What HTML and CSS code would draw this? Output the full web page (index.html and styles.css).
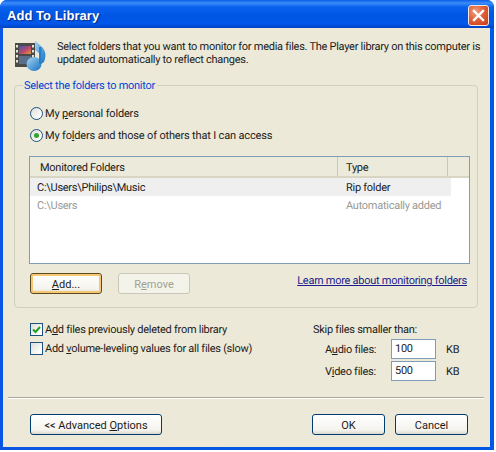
FILE: index.html
```html
<!DOCTYPE html>
<html lang="en">
<head>
<meta charset="utf-8">
<title>Add To Library</title>
<link rel="stylesheet" href="styles.css">
</head>
<body>
<div class="window">
  <header class="titlebar">
    <span class="title">Add To Library</span>
    <span class="close">
      <svg width="15" height="15" viewBox="0 0 15 15"><path d="M3 3 L12 12 M12 3 L3 12" stroke="#fff" stroke-width="2.4" stroke-linecap="square" fill="none"/></svg>
    </span>
  </header>
  <main class="client">
    <div class="intro">
      <svg class="media-icon" width="34" height="34" viewBox="0 0 34 34">
        <defs>
          <linearGradient id="note" x1="0" y1="0" x2="1" y2="1"><stop offset="0" stop-color="#a8d6f4"/><stop offset="1" stop-color="#1470c0"/></linearGradient>
          <linearGradient id="pic" x1="0" y1="0" x2="1" y2="1"><stop offset="0" stop-color="#3a58b8"/><stop offset=".55" stop-color="#c0486a"/><stop offset="1" stop-color="#d8a040"/></linearGradient>
        </defs>
        <path d="M21 3 C22 3 24 5 27 8 C31 12 33 16 30 24 L27 26 L26 16 L21 12 Z" fill="url(#note)"/>
        <rect x="1" y="5" width="20" height="24" fill="#4a4a48"/>
        <rect x="5" y="8" width="12" height="8" fill="url(#pic)"/>
        <rect x="5" y="18" width="12" height="8" fill="#58708a"/>
        <path d="M2 7h2v2.500h-2zM2 12h2v2.500h-2zM2 17h2v2.500h-2zM2 22h2v2.500h-2zM18 7h2v2.500h-2zM18 12h2v2.500h-2zM18 17h2v2.500h-2zM18 22h2v2.500h-2z" fill="#e8e4d8"/>
        <ellipse cx="20" cy="26" rx="7.500" ry="7" fill="url(#note)"/>
        <rect x="25" y="9" width="2.500" height="17" fill="#2a80c8"/>
      </svg>
      <p class="intro-text">Select folders that you want to monitor for media files. The Player library on this computer is updated automatically to reflect changes.</p>
    </div>

    <fieldset class="group">
      <legend class="group-title">Select the folders to monitor</legend>
      <label class="radio-row">
        <span class="radio"></span>
        <span>My <u>p</u>ersonal folders</span>
      </label>
      <label class="radio-row">
        <span class="radio"><span class="radio-dot"></span></span>
        <span>My fo<u>l</u>ders and those of others that I can access</span>
      </label>
      <div class="list">
        <div class="list-head">
          <span class="col-a head-cell">Monitored Folders</span>
          <span class="col-b head-cell">Type</span>
          <span class="col-c"></span>
        </div>
        <div class="list-row selected"><span class="col-a">C:\Users\Philips\Music</span><span class="col-b">Rip folder</span></div>
        <div class="list-row muted"><span class="col-a">C:\Users</span><span class="col-b">Automatically added</span></div>
      </div>
      <div class="list-actions">
        <button class="btn btn-add focused" type="button"><u>A</u>dd...</button>
        <button class="btn btn-add disabled" type="button">R<u>e</u>move</button>
        <a class="link" href="#">Learn more about monitoring folders</a>
      </div>
    </fieldset>

    <div class="options">
      <div class="checks">
        <label class="check-row">
          <span class="checkbox"><svg width="11" height="11" viewBox="0 0 11 11"><path d="M2 5.500 L4.500 8 L9 3" stroke="#21a121" stroke-width="2" fill="none"/></svg></span>
          <span>A<u>d</u>d files previously deleted from library</span>
        </label>
        <label class="check-row">
          <span class="checkbox"></span>
          <span>Add <u>v</u>olume-leveling values for all files (slow)</span>
        </label>
      </div>
      <div class="skip">
        <div class="skip-title">Skip files smaller than:</div>
        <div class="skip-row"><span class="skip-label">A<u>u</u>dio files:</span><span class="field">100</span><span>KB</span></div>
        <div class="skip-row"><span class="skip-label">V<u>i</u>deo files:</span><span class="field">500</span><span>KB</span></div>
      </div>
    </div>

    <hr class="separator">

    <div class="footer">
      <button class="btn btn-adv" type="button">&lt;&lt; Advanced <u>O</u>ptions</button>
      <div class="footer-right">
        <button class="btn btn-ok" type="button">OK</button>
        <button class="btn btn-ok" type="button">Cancel</button>
      </div>
    </div>
  </main>
</div>
</body>
</html>
```
FILE: styles.css
```css
* { box-sizing: border-box; }
html, body { margin: 0; padding: 0; background: #fff; }
body { width: 496px; height: 452px; font: 11px/13px Roboto, "Liberation Sans", sans-serif; color: #1c1c1c; white-space: nowrap; text-rendering: geometricPrecision; letter-spacing: -.27px; }
u { text-decoration: underline; text-underline-offset: 1px; }
.window {
  width: 494px; height: 450px; display: flex; flex-direction: column;
  background: linear-gradient(90deg, #0a55e4 0, #0058e6 100%);
  border-radius: 7px 7px 0 0; overflow: hidden;
}
.titlebar {
  height: 28px; flex: none; display: flex; align-items: center; justify-content: space-between;
  padding: 3px 5px 0 7px;
  background: linear-gradient(180deg, #0a5ce8 0, #3c8cf8 3px, #0a62ee 7px, #0055e4 16px, #0058ea 24px, #0040c0 28px);
}
.title { color: #fff; font: bold 13px/16px "Liberation Sans", Arial, sans-serif; text-shadow: 1px 1px 1px #0a2a80; letter-spacing: .05px; }
.close {
  width: 21px; height: 21px; display: flex; align-items: center; justify-content: center;
  border: 1px solid #f4e8e0; border-radius: 3px;
  background: radial-gradient(circle at 35% 30%, #f0a080 0, #e0603a 45%, #c43a18 100%);
}
.client {
  flex: 1; margin: 0 4px 3px 3px; background: #ece9d8; padding: 10px 5px 0 7px;
  display: flex; flex-direction: column; min-height: 0;
}
.intro { display: flex; gap: 9px; padding-left: 4px; height: 41px; }
.media-icon { flex: none; }
.intro-text { margin: 2px 0 0; width: 428px; white-space: normal; }
.group {
  margin: 0 0 0 4px; width: 464px; height: 229px; padding: 10px 8px 0 12px; min-width: 0;
  border: 1px solid #d0d0bf; border-radius: 4px;
}
.group-title { color: #0046d5; padding: 0 2px 0 1px; margin-left: -4px; line-height: 13px; }
.radio-row { display: flex; align-items: center; gap: 2px; height: 22px; padding-left: 3px; margin-left: 0; letter-spacing: -.17px; }
.radio {
  width: 13px; height: 13px; border-radius: 50%; flex: none; display: flex; align-items: center; justify-content: center;
  border: 1px solid #1c5180; background: linear-gradient(135deg, #dcdcd7 0, #fff 85%);
}
.radio-dot { width: 5px; height: 5px; border-radius: 50%; background: #2fa52f; }
.list { margin: 10px 0 0 2px; width: 441px; height: 108px; border: 1px solid #7f9db9; background: #fff; }
.list-head { display: flex; height: 21px; background: #ebeadb; border-bottom: 2px solid #d8d5c2; }
.head-cell { border-right: 1px solid #c9c7ba; line-height: 21px; }
.col-a { width: 308px; padding-left: 10px; flex: none; }
.col-b { width: 110px; padding-left: 8px; flex: none; }
.col-c { flex: 1; }
.list-row { display: flex; height: 18px; line-height: 19px; width: 421px; }
.list-row .col-a { padding-left: 7px; }
.selected { background: #efefef; }
.muted { color: #9a9a96; }
.list-actions { display: flex; align-items: center; margin: 9px 0 0 3px; width: 437px; }
.btn {
  font: inherit; color: #1c1c1c; height: 21px; padding: 1px 0 0; border: 1px solid #003c74; border-radius: 3px;
  background: linear-gradient(180deg, #fff 0, #f4f3ed 80%, #dcd8cc 100%);
}
.btn-add { width: 72px; margin-right: 16px; }
.focused { border-color: #5a4a20; box-shadow: inset 0 0 0 2px #f6c874; }
.disabled { border-color: #c9c7ba; background: #f4f3ea; color: #a1a192; }
.link { margin-left: auto; color: #1c1c8c; text-decoration: underline; transform: translateY(-3px); }
.options { display: flex; justify-content: space-between; padding: 0 0 0 20px; margin-top: 12px; height: 77px; }
.checks { display: flex; flex-direction: column; gap: 1px; }
.check-row { display: flex; align-items: center; gap: 2px; height: 18px; }
.checkbox { width: 13px; height: 13px; flex: none; border: 1px solid #1c5180; background: linear-gradient(135deg, #dcdcd7 0, #fff 85%); display: flex; align-items: center; justify-content: center; }
.skip { width: 168px; margin-top: 4px; margin-right: 4px; }
.skip-title { height: 14px; line-height: 12px; }
.skip-row { display: flex; align-items: center; height: 22px; }
.skip-label { width: 78px; padding-left: 12px; flex: none; }
.field { width: 45px; height: 20px; border: 1px solid #7f9db9; background: #fff; padding-left: 3px; line-height: 18px; margin-right: 10px; flex: none; }
.separator { margin: 0 0 0 -2px; width: 476px; height: 2px; border: 0; border-top: 1px solid #aca899; border-bottom: 1px solid #fff; }
.footer { display: flex; justify-content: space-between; padding-left: 20px; padding-right: 17px; margin-top: 15px; }
.footer-right { display: flex; gap: 10px; }
.btn-adv { width: 132px; }
.btn-ok { width: 73px; }
```
